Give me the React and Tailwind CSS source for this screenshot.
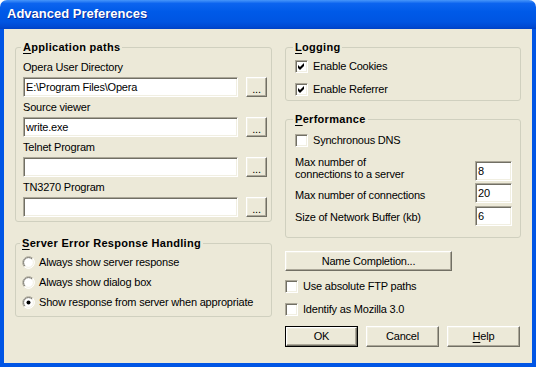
import React from "react";

const sunken =
  "border border-t-[#ACA899] border-l-[#ACA899] border-b-white border-r-white shadow-[inset_1px_1px_0_#716F64,inset_-1px_-1px_0_#F1EFE2] bg-white";
const raised =
  "border border-t-white border-l-white border-b-[#716F64] border-r-[#716F64] shadow-[inset_-1px_-1px_0_#ACA899,inset_1px_1px_0_#F1EFE2] bg-[#ECE9D8]";

function U({ children }) {
  return <span className="underline underline-offset-[2px]">{children}</span>;
}

function Group({ label, className = "", pad = "px-[7px]", children }) {
  return (
    <fieldset
      className={`border border-[#D0D0BF] rounded-[3px] ${pad} ${className}`}
    >
      <legend className="-ml-[2px] px-[2px] font-bold text-[11px] leading-[14px] tracking-[0.3px]">
        {label}
      </legend>
      {children}
    </fieldset>
  );
}

function Check({ checked, label, className = "" }) {
  return (
    <div className={`flex items-center h-[13px] ${className}`}>
      <div className={`w-[13px] h-[13px] shrink-0 ${sunken} flex items-center justify-center`}>
        {checked && (
          <svg width="7" height="7" viewBox="0 0 7 7">
            <path d="M0 2 L2 4 L6 0 L6 3 L2 7 L0 5 Z" fill="#000" />
          </svg>
        )}
      </div>
      <span className="ml-[5px] text-[11px] leading-[13px]">{label}</span>
    </div>
  );
}

function Radio({ checked, label, className = "" }) {
  return (
    <div className={`flex items-center h-[13px] ${className}`}>
      <svg width="13" height="13" viewBox="0 0 13 13" className="shrink-0">
        <circle cx="6.5" cy="6.5" r="6" fill="#fff" />
        <path d="M2.26 10.74 A6 6 0 0 1 10.74 2.26" fill="none" stroke="#ACA899" strokeWidth="1" />
        <path d="M3 10 A4.95 4.95 0 0 1 10 3" fill="none" stroke="#716F64" strokeWidth="1" />
        <path d="M10.74 2.26 A6 6 0 0 1 2.26 10.74" fill="none" stroke="#ffffff" strokeWidth="1" />
        <path d="M10 3 A4.95 4.95 0 0 1 3 10" fill="none" stroke="#F1EFE2" strokeWidth="1" />
        {checked && <circle cx="6.5" cy="6.5" r="2" fill="#000" />}
      </svg>
      <span className="ml-[4px] text-[11px] leading-[13px]">{label}</span>
    </div>
  );
}

function PathRow({ label, value, first }) {
  return (
    <div className={first ? "mt-[6px]" : "mt-[3px]"}>
      <div className="text-[11px] leading-[14px]">{label}</div>
      <div className="flex items-center mt-[3px]">
        <div className={`w-[215px] h-[20px] ${sunken} flex items-center pl-[2px] text-[11px]`}>
          {value}
        </div>
        <div className={`ml-[8px] w-[21px] h-[20px] ${raised} flex items-end justify-center pb-[3px] text-[11px] leading-[8px]`}>
          ...
        </div>
      </div>
    </div>
  );
}

function NumBox({ value, className = "" }) {
  return (
    <div className={`w-[37px] h-[20px] ${sunken} flex items-center pl-[2px] text-[11px] ${className}`}>
      {value}
    </div>
  );
}

function Btn({ children, def, className = "" }) {
  return (
    <div className={`${def ? "border border-black" : ""} ${className}`}>
      <div className={`${raised} h-full w-full flex items-center justify-center text-[11px]`}>
        {children}
      </div>
    </div>
  );
}

export default function App() {
  return (
    <div className="w-[536px] h-[367px] bg-white" style={{ fontFamily: "'Liberation Sans', Arial, sans-serif" }}>
      <div className="w-[536px] h-[367px] flex flex-col">
        <div className="h-[29px] rounded-t-[7px] bg-[linear-gradient(to_bottom,#4796fa_0%,#0c64ef_12%,#005ae8_40%,#0055e2_75%,#004ad3_92%,#0042c4_100%)] flex items-center pl-[7px] pb-[1px]">
          <span className="text-white font-bold text-[13px] [text-shadow:1px_1px_0_#0b2a9a]">
            Advanced Preferences
          </span>
        </div>
        <div className="flex-1 bg-[#ECE9D8] border-[4px] border-t-0 border-[#0055E5] tracking-[-0.2px]">
          <div className="flex pt-[11px] pl-[11px] text-black">
            {/* Left column */}
            <div className="w-[257px] flex flex-col">
              <Group label={<><U>A</U>pplication paths</>} className="pb-[4px] pr-[4px]">
                <PathRow first label="Opera User Directory" value="E:\Program Files\Opera" />
                <PathRow label="Source viewer" value="write.exe" />
                <PathRow label="Telnet Program" value="" />
                <PathRow label="TN3270 Program" value="" />
              </Group>
              <Group label={<><U>S</U>erver Error Response Handling</>} className="mt-[14px] pb-[7px]" pad="px-[6px]">
                <Radio className="mt-[6px]" label="Always show server response" />
                <Radio className="mt-[7px]" label="Always show dialog box" />
                <Radio className="mt-[7px]" checked label="Show response from server when appropriate" />
              </Group>
            </div>
            {/* Right column */}
            <div className="w-[236px] ml-[13px] flex flex-col">
              <Group label={<><U>L</U>ogging</>} pad="px-[9px]" className="pb-[4px]">
                <Check className="mt-[6px]" checked label="Enable Cookies" />
                <Check className="mt-[10px]" checked label="Enable Referrer" />
              </Group>
              <Group label={<><U>P</U>erformance</>} pad="pl-[9px] pr-[8px]" className="mt-[11px] pb-[11px]">
                <Check className="mt-[8px]" label="Synchronous DNS" />
                <div className="mt-[9px] flex justify-between items-start h-[25px]">
                  <div className="text-[11px] leading-[12px]">
                    Max number of
                    <br />
                    connections to a server
                  </div>
                  <NumBox className="mt-[5px]" value="8" />
                </div>
                <div className="mt-[2px] flex justify-between items-center h-[20px]">
                  <div className="text-[11px] leading-[12px] pt-[3px]">Max number of connections</div>
                  <NumBox value="20" />
                </div>
                <div className="mt-[3px] flex justify-between items-center h-[20px]">
                  <div className="text-[11px] leading-[12px] pt-[2px]">Size of Network Buffer (kb)</div>
                  <NumBox value="6" />
                </div>
              </Group>
              <Btn className="mt-[13px] w-[167px] h-[20px]">Name Completion...</Btn>
              <Check className="mt-[9px]" label="Use absolute FTP paths" />
              <Check className="mt-[10px]" label="Identify as Mozilla 3.0" />
              <div className="mt-[10px] flex gap-[8px]">
                <Btn def className="w-[73px] h-[21px]">OK</Btn>
                <Btn className="w-[73px] h-[21px]">Cancel</Btn>
                <Btn className="w-[73px] h-[21px]"><span><U>H</U>elp</span></Btn>
              </div>
            </div>
          </div>
        </div>
      </div>
    </div>
  );
}
